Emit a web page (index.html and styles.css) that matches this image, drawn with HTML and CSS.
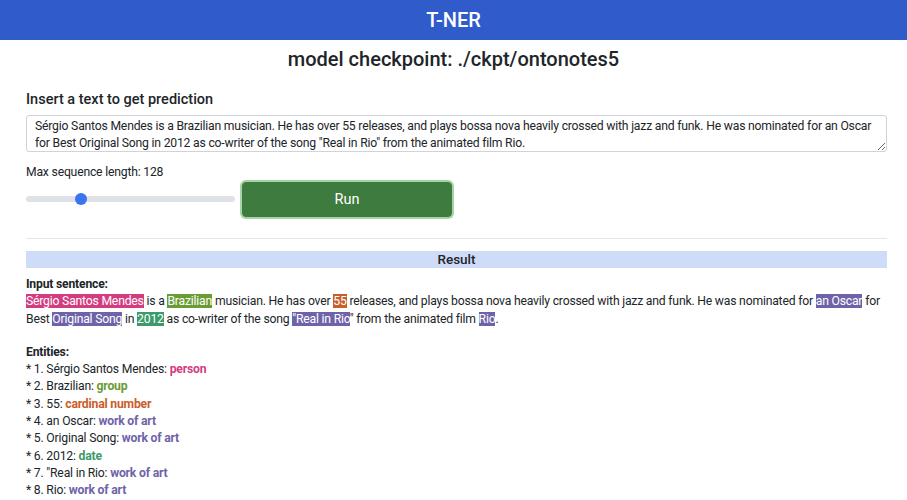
FILE: index.html
```html
<!DOCTYPE html>
<html>
<head>
<meta charset="utf-8">
<link rel="stylesheet" href="styles.css">
</head>
<body>
<header class="topbar">T-NER</header>
<h1 class="title">model checkpoint: ./ckpt/ontonotes5</h1>
<main class="container">
  <label class="prompt" for="txt">Insert a text to get prediction</label>
  <textarea id="txt" class="input" spellcheck="false">Sérgio Santos Mendes is a Brazilian musician. He has over 55 releases, and plays bossa nova heavily crossed with jazz and funk. He was nominated for an Oscar for Best Original Song in 2012 as co-writer of the song "Real in Rio" from the animated film Rio.</textarea>
  <div class="maxlen">Max sequence length: 128</div>
  <div class="controls">
    <div class="slider"><div class="track"></div><div class="thumb"></div></div>
    <button class="run">Run</button>
  </div>
  <hr class="sep">
  <div class="result-bar">Result</div>
  <div class="block">
    <div class="bold">Input sentence:</div>
    <div class="sentence"><span class="hl person">Sérgio Santos Mendes</span> is a <span class="hl group">Brazilian</span> musician. He has over <span class="hl cardinal">55</span> releases, and plays bossa nova heavily crossed with jazz and funk. He was nominated for <span class="hl art">an Oscar</span> for Best <span class="hl art">Original Song</span> in <span class="hl date">2012</span> as co-writer of the song <span class="hl art">"Real in Rio</span>" from the animated film <span class="hl art">Rio</span>.</div>
  </div>
  <div class="block entities">
    <div class="bold">Entities:</div>
    <div>* 1. Sérgio Santos Mendes: <b class="c-person">person</b></div>
    <div>* 2. Brazilian: <b class="c-group">group</b></div>
    <div>* 3. 55: <b class="c-cardinal">cardinal number</b></div>
    <div>* 4. an Oscar: <b class="c-art">work of art</b></div>
    <div>* 5. Original Song: <b class="c-art">work of art</b></div>
    <div>* 6. 2012: <b class="c-date">date</b></div>
    <div>* 7. "Real in Rio: <b class="c-art">work of art</b></div>
    <div>* 8. Rio: <b class="c-art">work of art</b></div>
  </div>
</main>
</body>
</html>
```
FILE: styles.css
```css
* { box-sizing: border-box; }
body {
  margin: 0;
  font-family: Roboto, "Liberation Sans", Arial, sans-serif;
  color: #212529;
  background: #fff;
  font-size: 12.2px;
  letter-spacing: -0.2px;
}
.topbar {
  height: 40px;
  background: #2f5bcb;
  color: #fff;
  font-size: 20px;
  font-weight: 500;
  letter-spacing: 0;
  display: flex;
  align-items: center;
  justify-content: center;
}
.title {
  margin: 8px 0 0;
  font-size: 20px;
  font-weight: 500;
  letter-spacing: 0;
  text-align: center;
  line-height: 22px;
}
.container {
  padding: 0 20px 0 26px;
  display: flex;
  flex-direction: column;
}
.prompt {
  margin-top: 21px;
  font-size: 14.5px;
  font-weight: 500;
  letter-spacing: 0;
  line-height: 18px;
}
.input {
  margin-top: 6px;
  height: 37px;
  width: 100%;
  border: 1px solid #ced4da;
  border-radius: 3px;
  padding: 2px 8px;
  font-family: inherit;
  font-size: 12.2px;
  letter-spacing: -0.2px;
  line-height: 17px;
  color: #212529;
  resize: vertical;
  overflow: hidden;
}
.maxlen {
  margin-top: 12px;
  line-height: 16px;
}
.controls {
  display: flex;
  align-items: center;
  gap: 7px;
  margin-top: 1px;
}
.slider {
  position: relative;
  width: 209px;
  height: 36px;
  display: flex;
  align-items: center;
}
.track {
  width: 100%;
  height: 6px;
  border-radius: 3px;
  background: #dee2e6;
}
.thumb {
  position: absolute;
  left: 49px;
  top: 12px;
  width: 12px;
  height: 12px;
  border-radius: 50%;
  background: #3b74f0;
}
.run {
  width: 210px;
  height: 35px;
  background: #3e7b3e;
  color: #fff;
  border: 1px solid #3e7b3e;
  border-radius: 4px;
  box-shadow: 0 0 0 2px #a6d4a6;
  font-family: inherit;
  font-size: 14.5px;
  letter-spacing: 0;
}
.sep {
  margin: 21px 0 12px;
  border: 0;
  border-top: 1px solid #e5e5e5;
  width: 100%;
}
.result-bar {
  background: #cfdcf8;
  text-align: center;
  font-size: 13.5px;
  font-weight: 500;
  letter-spacing: 0;
  height: 17px;
  line-height: 17px;
  width: 100%;
}
.block {
  margin-top: 8px;
  line-height: 17.3px;
}
.bold { font-weight: 700; }
.entities { margin-top: 16px; }
.hl { color: #fff; }
.person { background: #d43c80; }
.group { background: #6a9c35; }
.cardinal { background: #c95e2b; }
.art { background: #6e63a9; }
.date { background: #3c9a6b; }
.c-person { color: #d43c80; }
.c-group { color: #6a9c35; }
.c-cardinal { color: #c95e2b; }
.c-art { color: #6e63a9; }
.c-date { color: #3c9a6b; }
```
